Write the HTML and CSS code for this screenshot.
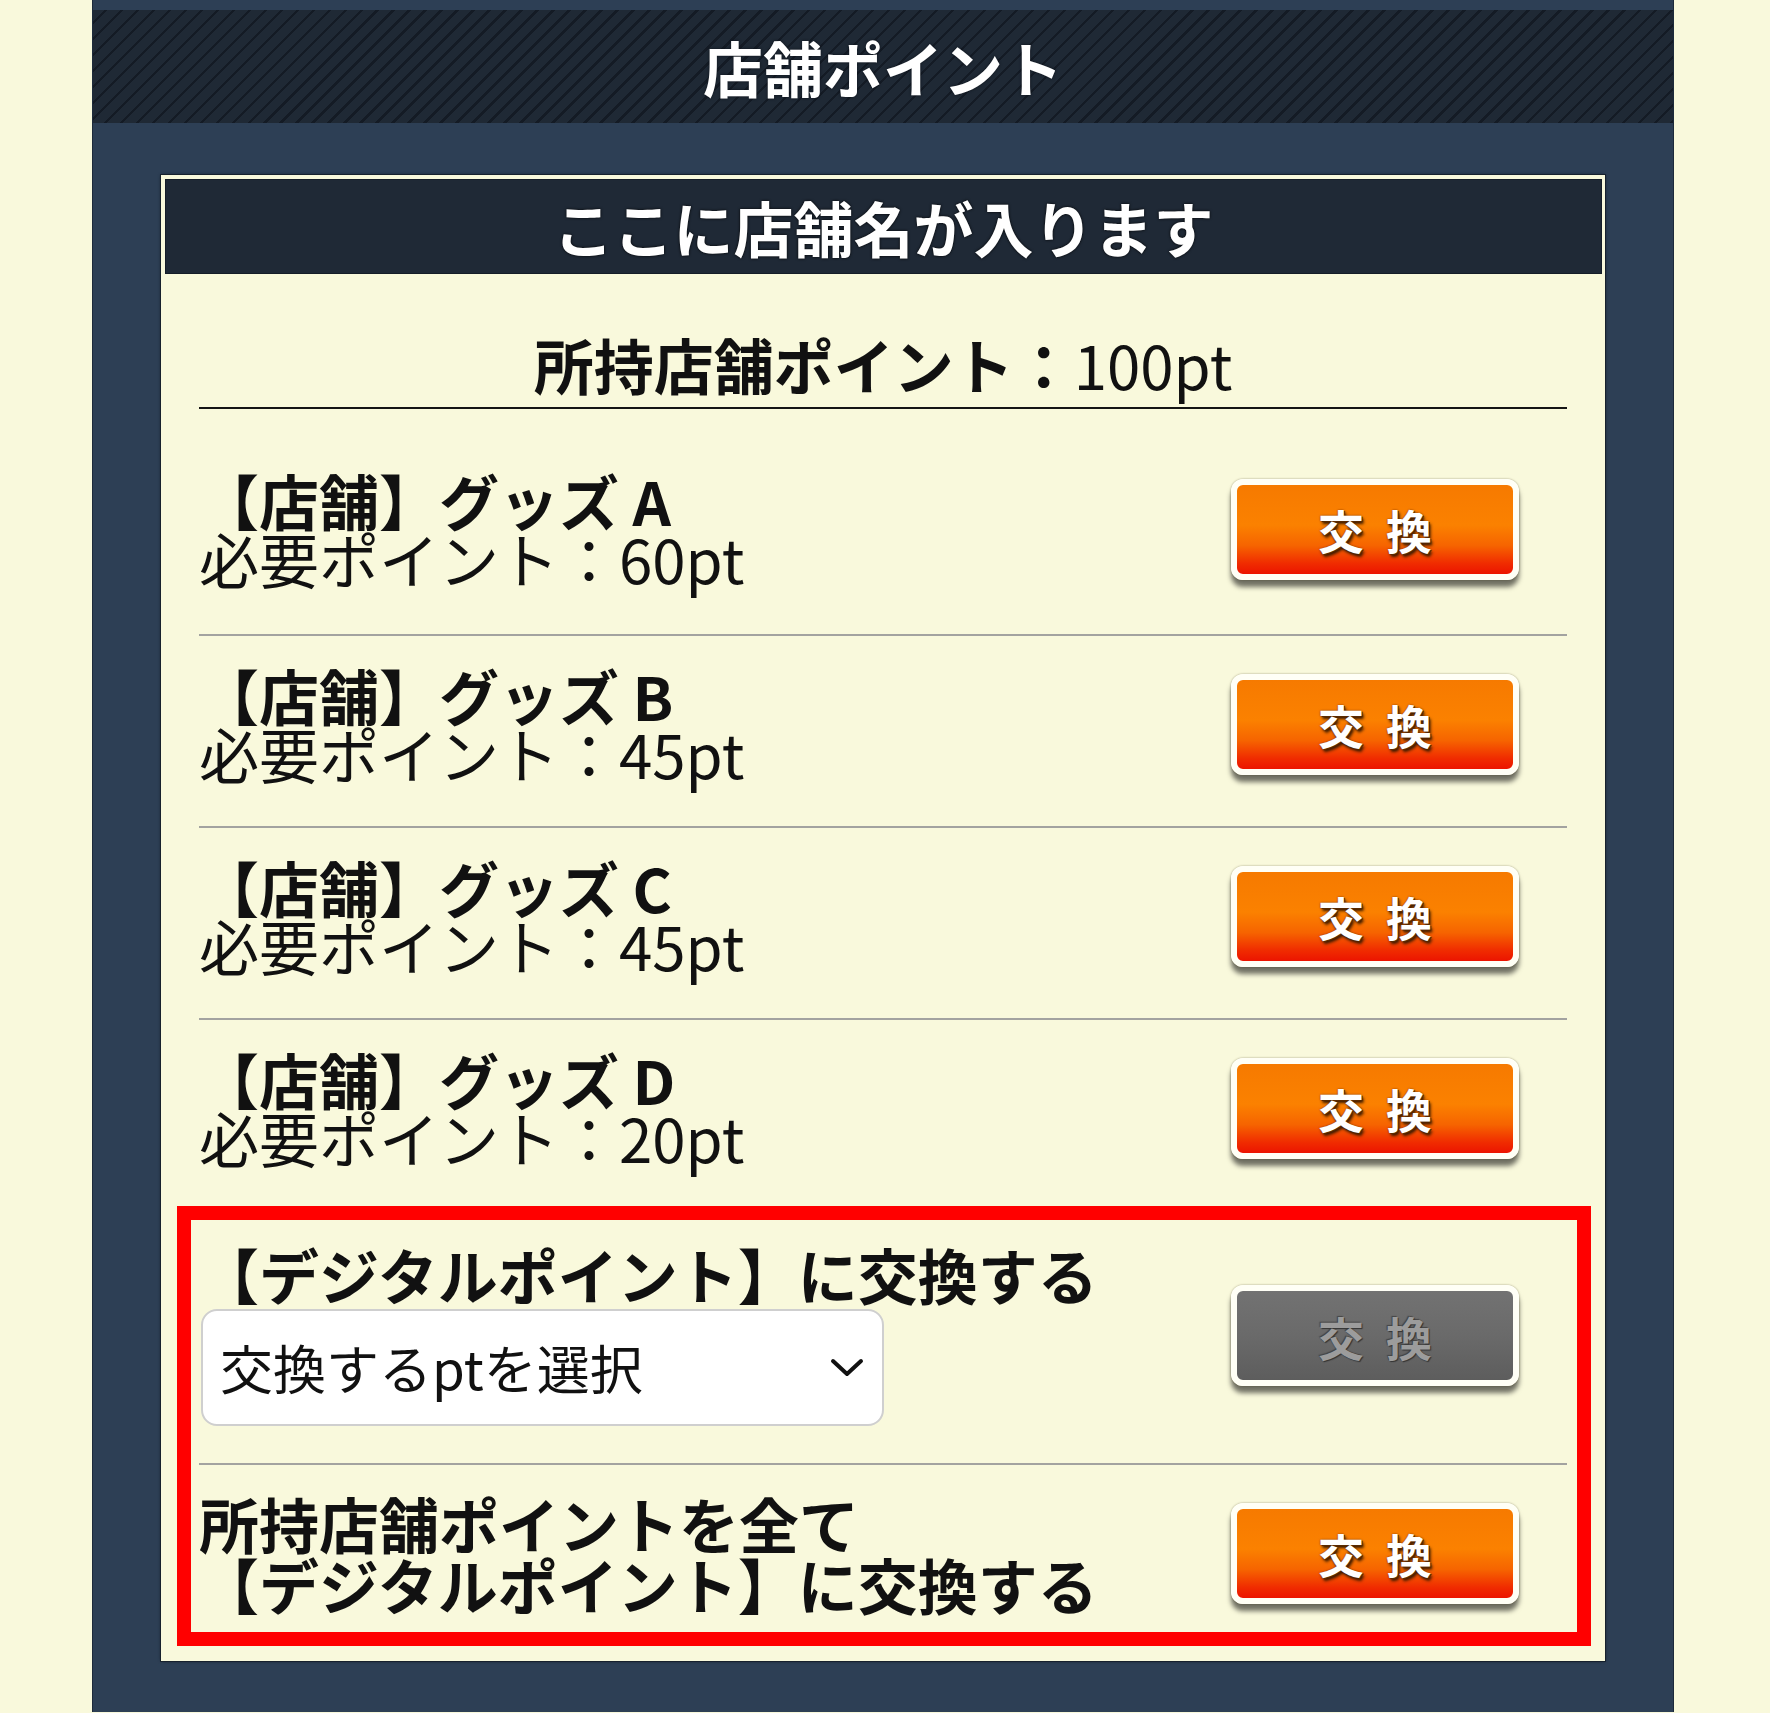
FILE: index.html
```html
<!DOCTYPE html>
<html lang="ja">
<head>
<meta charset="utf-8">
<title>店舗ポイント</title>
<link rel="stylesheet" href="styles.css">
</head>
<body>
<div class="panel">
  <h1 class="title">店舗ポイント</h1>
  <section class="card">
    <h2 class="card-head">ここに店舗名が入ります</h2>
    <div class="card-body">
      <p class="summary"><b>所持店舗ポイント：</b>100pt</p>

      <div class="item item-first">
        <div class="item-text">
          <div class="item-name">【店舗】グッズ A</div>
          <div class="item-cost">必要ポイント：60pt</div>
        </div>
        <button class="btn">交換</button>
      </div>
      <div class="item">
        <div class="item-text">
          <div class="item-name">【店舗】グッズ B</div>
          <div class="item-cost">必要ポイント：45pt</div>
        </div>
        <button class="btn">交換</button>
      </div>
      <div class="item">
        <div class="item-text">
          <div class="item-name">【店舗】グッズ C</div>
          <div class="item-cost">必要ポイント：45pt</div>
        </div>
        <button class="btn">交換</button>
      </div>
      <div class="item">
        <div class="item-text">
          <div class="item-name">【店舗】グッズ D</div>
          <div class="item-cost">必要ポイント：20pt</div>
        </div>
        <button class="btn">交換</button>
      </div>

      <div class="highlight">
        <div class="item digital">
          <div class="item-text">
            <div class="item-name">【デジタルポイント】に交換する</div>
            <div class="fake-select">
              <span>交換するptを選択</span>
              <svg class="chev" width="34" height="20" viewBox="0 0 34 20"><polyline points="3,3 17,16 31,3" fill="none" stroke="#111" stroke-width="4" stroke-linecap="round" stroke-linejoin="round"/></svg>
            </div>
          </div>
          <button class="btn btn-off">交換</button>
        </div>
        <div class="item all">
          <div class="item-text">
            <div class="item-name">所持店舗ポイントを全て<br>【デジタルポイント】に交換する</div>
          </div>
          <button class="btn">交換</button>
        </div>
      </div>
    </div>
  </section>
</div>
</body>
</html>
```

FILE: styles.css
```css
html, body {
  margin: 0;
  padding: 0;
}
body {
  background: #f9f9dc;
  font-family: "Noto Sans CJK JP", "Noto Sans", sans-serif;
  color: #111;
}
.panel {
  width: 1580px;
  margin-left: 93px;
  background: #2d3f55;
  padding: 10px 0 51px;
  box-shadow: 0 0 0 1px #1d2a3a;
}
.title {
  margin: 0;
  height: 113px;
  display: flex;
  align-items: center;
  justify-content: center;
  font-size: 60px;
  font-weight: 700;
  color: #fff;
  line-height: 1;
  text-shadow: 0 0 3px #0b1018;
  background-color: #1f2935;
  background-image: repeating-linear-gradient(135deg, #1f2935 0px, #1f2935 8px, #141b25 8px, #141b25 10.5px, #1f2935 10.5px, #1f2935 11.3px);
}
.card {
  margin: 52px 68px 0;
  background: #f9f9dc;
  padding: 4px 3px 29px 4px;
  box-shadow: 0 0 0 1px #17212d, 0 0 3px #0f1620;
}
.card-head {
  margin: 0;
  height: 95px;
  display: flex;
  align-items: center;
  justify-content: center;
  background: #1f2936;
  color: #fff;
  font-size: 60px;
  font-weight: 700;
  line-height: 1;
  text-shadow: 0 0 3px #000;
  box-shadow: inset 0 0 0 1px #151d28;
}
.card-body {
  padding: 0 35px 0 34px;
}
.summary {
  margin: 0;
  padding: 61px 0 14px;
  text-align: center;
  font-size: 60px;
  line-height: 58px;
  border-bottom: 2px solid #151515;
}
.summary b {
  font-weight: 700;
}
.item {
  display: flex;
  align-items: center;
  justify-content: space-between;
  padding: 30px 48px 44px 0;
  border-bottom: 2px solid #a3a3a0;
}
.item-first {
  padding-top: 62px;
  padding-bottom: 47px;
}
.item-text {
  font-size: 60px;
  line-height: 58px;
}
.item-name {
  font-weight: 700;
}
.item-cost {
  font-weight: 400;
}
.btn {
  box-sizing: border-box;
  width: 288px;
  height: 101px;
  border: 6px solid #fffff6;
  border-radius: 12px;
  padding: 0 0 0 22px;
  font-family: inherit;
  font-size: 46px;
  font-weight: 700;
  letter-spacing: 22px;
  line-height: 1;
  color: #fff;
  text-shadow: 1px 1px 0 #5a2a00, 2px 3px 3px #3a1a00, 0 0 2px #7a3000;
  background: linear-gradient(#f67a00 0%, #fb8100 45%, #f66400 68%, #f02c00 88%, #ec1400 100%);
  box-shadow: 0 0 2px rgba(60, 50, 20, 0.5), 0 7px 5px rgba(0, 0, 0, 0.55);
  cursor: pointer;
  flex: none;
}
.btn-off {
  color: #9c9c9c;
  text-shadow: 1px 1px 1px #333, -1px -1px 1px #444;
  background: linear-gradient(#727272 0%, #6a6a6a 50%, #5d5d5d 100%);
}
.highlight {
  position: relative;
}
.highlight::after {
  content: "";
  position: absolute;
  top: -6px;
  left: -22px;
  right: -24px;
  bottom: -14px;
  border: 14px solid #ff0000;
  pointer-events: none;
}
.digital {
  padding: 33px 48px 37px 0;
}
.digital .item-name {
  margin-bottom: 6px;
}
.fake-select {
  box-sizing: border-box;
  width: 683px;
  height: 117px;
  margin-left: 2px;
  background: #fff;
  border: 2px solid #cfcfcf;
  border-radius: 16px;
  display: flex;
  align-items: center;
  justify-content: space-between;
  padding: 0 18px 0 17px;
  font-size: 53px;
  font-weight: 400;
  line-height: 1;
  color: #111;
}
.chev {
  display: block;
}
.all {
  padding: 27px 48px 18px 0;
  border-bottom: none;
}
.all .item-text {
  line-height: 61px;
}
```
